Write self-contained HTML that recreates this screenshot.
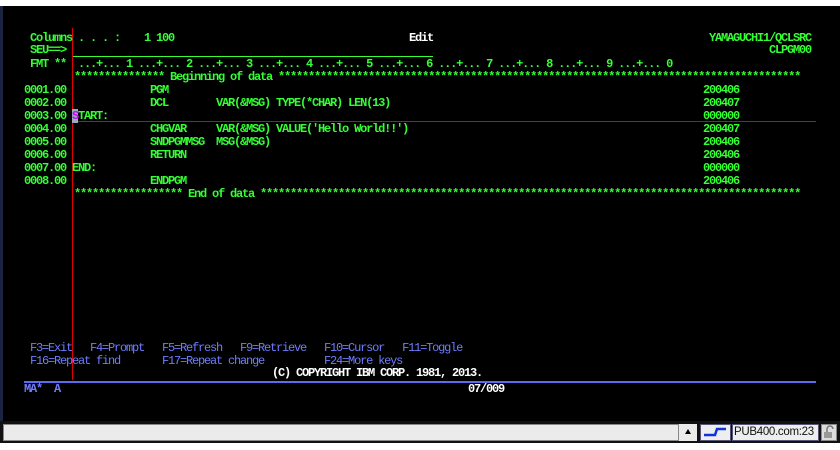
<!DOCTYPE html>
<html><head><meta charset="utf-8"><style>
body{margin:0;width:840px;height:450px;background:#fff;position:relative;overflow:hidden;font-family:"Liberation Mono",monospace;}
#t{position:absolute;left:0;top:6px;width:840px;height:418px;background:#000;border-left:3px solid #1a2440;box-sizing:border-box;}
.l{position:absolute;white-space:pre;font-size:12px;font-weight:bold;letter-spacing:-1.2px;line-height:13px;height:13px;color:#33ff33;}
.b{color:#6e7dff;font-weight:normal;}
.w{color:#fff;}
.hr{position:absolute;}
</style></head><body>
<div id="t"></div>
<div class="hr" style="left:72px;top:28px;width:1px;height:352px;background:#e00000"></div>
<div class="hr" style="left:73px;top:121px;width:743px;height:1px;background:#e00000"></div>
<div class="hr" style="left:73px;top:56px;width:360px;height:1px;background:#33ff33"></div>
<div class="hr" style="left:24px;top:381px;width:792px;height:2px;background:#5c6cf0"></div>

<div class="l" style="left:30px;top:32px">Columns . . . :    1 100</div>
<div class="l w" style="left:409px;top:32px">Edit</div>
<div class="l" style="left:709px;top:32px">YAMAGUCHI1/QCLSRC</div>
<div class="l" style="left:30px;top:44px">SEU==&gt;</div>
<div class="l" style="left:769px;top:44px">CLPGM00</div>
<div class="l" style="left:30px;top:58px">FMT **  ...+... 1 ...+... 2 ...+... 3 ...+... 4 ...+... 5 ...+... 6 ...+... 7 ...+... 8 ...+... 9 ...+... 0</div>
<div class="l" style="left:74px;top:71px">*************** Beginning of data ***************************************************************************************</div>
<div class="l" style="left:24px;top:84px">0001.00              PGM</div>
<div class="l" style="left:24px;top:97px">0002.00              DCL        VAR(&amp;MSG) TYPE(*CHAR) LEN(13)</div>
<div class="l" style="left:24px;top:110px">0003.00 <span style="background:#9ab;color:#c0f">S</span>TART:</div>
<div class="l" style="left:24px;top:123px">0004.00              CHGVAR     VAR(&amp;MSG) VALUE('Hello World!!')</div>
<div class="l" style="left:24px;top:136px">0005.00              SNDPGMMSG  MSG(&amp;MSG)</div>
<div class="l" style="left:24px;top:149px">0006.00              RETURN</div>
<div class="l" style="left:24px;top:162px">0007.00 END:</div>
<div class="l" style="left:24px;top:175px">0008.00              ENDPGM</div>
<div class="l" style="left:703px;top:84px">200406</div>
<div class="l" style="left:703px;top:97px">200407</div>
<div class="l" style="left:703px;top:110px">000000</div>
<div class="l" style="left:703px;top:123px">200407</div>
<div class="l" style="left:703px;top:136px">200406</div>
<div class="l" style="left:703px;top:149px">200406</div>
<div class="l" style="left:703px;top:162px">000000</div>
<div class="l" style="left:703px;top:175px">200406</div>
<div class="l" style="left:74px;top:188px">****************** End of data ******************************************************************************************</div>

<div class="l b" style="left:30px;top:342px">F3=Exit   F4=Prompt   F5=Refresh   F9=Retrieve   F10=Cursor   F11=Toggle</div>
<div class="l b" style="left:30px;top:355px">F16=Repeat find       F17=Repeat change          F24=More keys</div>
<div class="l w" style="left:272px;top:367px">(C) COPYRIGHT IBM CORP. 1981, 2013.</div>
<div class="l b" style="left:24px;top:383px;font-weight:bold">MA*  A</div>
<div class="l w" style="left:468px;top:383px">07/009</div>

<div style="position:absolute;left:0;top:421px;width:840px;height:22px;background:#111"></div>
<div style="position:absolute;left:3px;top:424px;width:674px;height:15px;background:#ebebeb;border:1px solid #888"></div>
<div style="position:absolute;left:679px;top:424px;width:18px;height:17px;background:#ebebeb"></div>
<div style="position:absolute;left:685px;top:429px;width:0;height:0;border-left:3px solid transparent;border-right:3px solid transparent;border-bottom:5px solid #000"></div>
<div style="position:absolute;left:700px;top:424px;width:29px;height:15px;background:#eee;border:1px solid #557"></div>
<svg style="position:absolute;left:702px;top:426px" width="26" height="12"><path d="M2 9H13L15 3H24" stroke="#1133dd" stroke-width="2.5" fill="none"/></svg>
<div style="position:absolute;left:732px;top:424px;width:84px;height:15px;background:#eee;border:1px solid #557;font-family:'Liberation Sans',sans-serif;font-size:11.5px;letter-spacing:-0.3px;line-height:15px;color:#111;padding-left:1px;overflow:hidden;white-space:nowrap">PUB400.com:23</div>
<div style="position:absolute;left:821px;top:424px;width:14px;height:15px;background:#ddd;border:1px solid #888"></div>
<svg style="position:absolute;left:822px;top:425px" width="13" height="14"><rect x="2" y="7" width="8" height="6" fill="#999"/><path d="M5 7V4a3 3 0 0 1 6 0" stroke="#777" stroke-width="1.5" fill="none"/></svg>
<div style="position:absolute;left:0;top:443px;width:840px;height:7px;background:#fff"></div>
</body></html>
